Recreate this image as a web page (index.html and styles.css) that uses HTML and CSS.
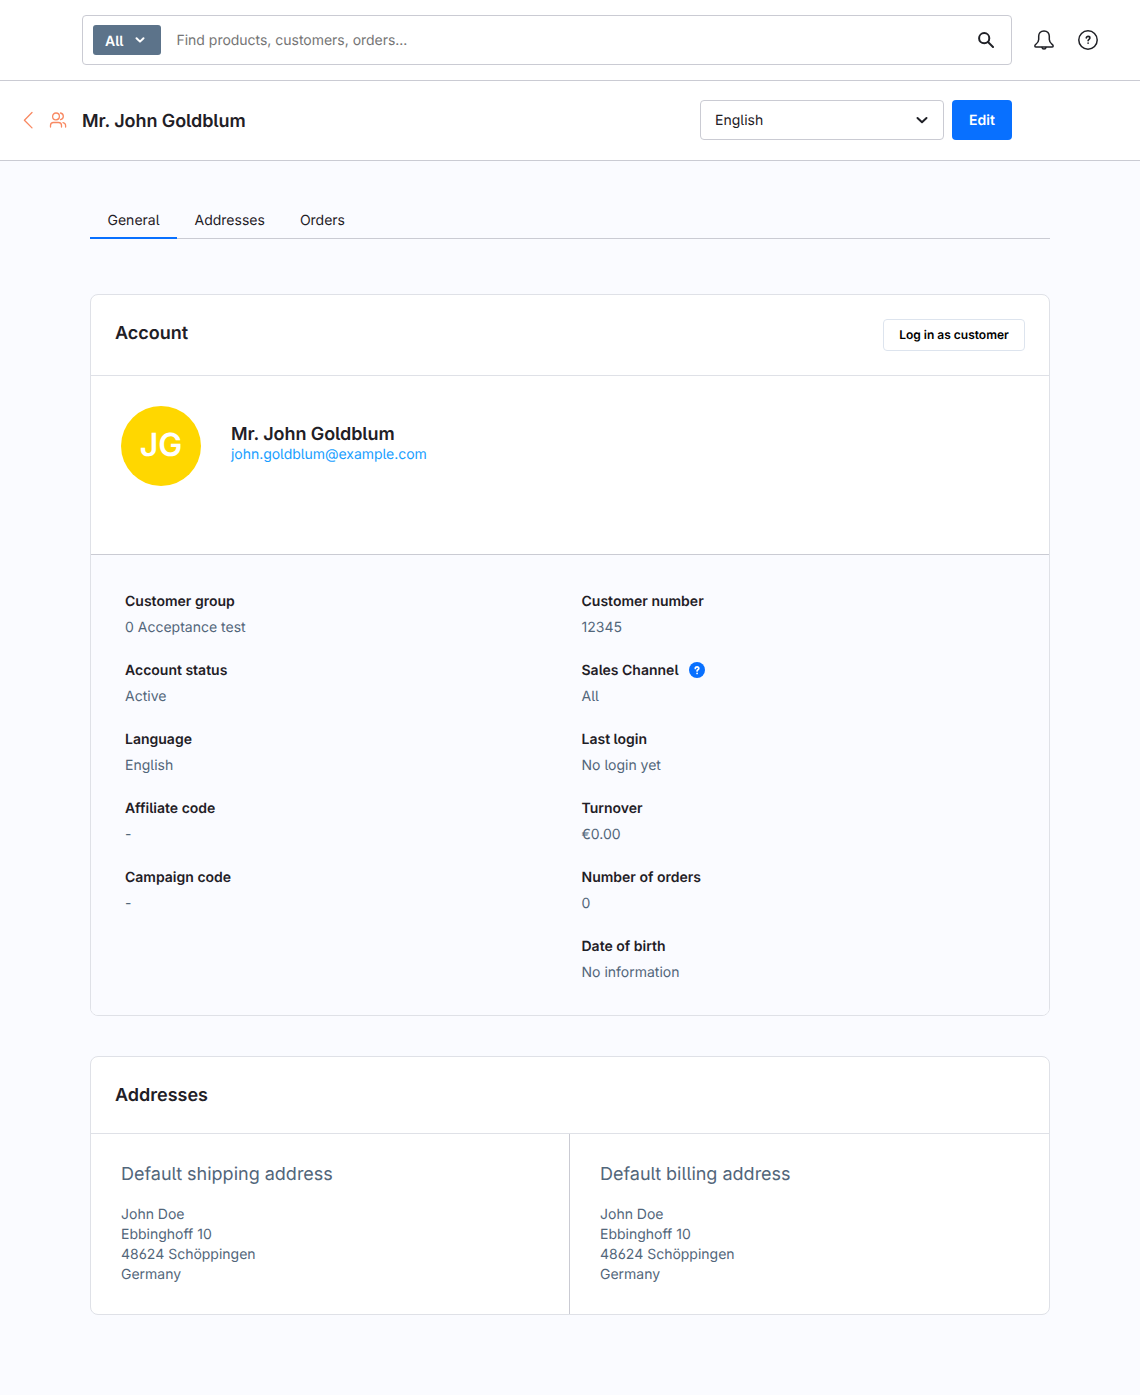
FILE: index.html
```html
<!DOCTYPE html>
<html lang="en">
<head>
<meta charset="utf-8">
<title>Mr. John Goldblum</title>
<link rel="stylesheet" href="styles.css">
</head>
<body>
<header class="topbar">
  <div class="search">
    <button class="search-type">All
      <svg class="search-caret" width="10" height="10" viewBox="0 0 10 10"><path d="M1.500 3.200 5 6.600 8.500 3.200"/></svg>
    </button>
    <span class="search-hint">Find products, customers, orders...</span>
    <svg class="search-icon" width="16" height="16" viewBox="0 0 16 16"><circle cx="6.200" cy="6.200" r="5.100"/><path d="m10 10 5 5"/></svg>
  </div>
  <svg class="bell" width="20" height="20" viewBox="0 0 20 20"><path d="M10 1C6.500 1 4.700 3.300 4.700 6.300v3.200c0 2-.9 3.200-2.800 4.800-1.600 1.300-1.300 2.700.3 2.700h15.600c1.600 0 1.900-1.400.3-2.700-1.900-1.600-2.800-2.800-2.800-4.800V6.300C15.300 3.300 13.500 1 10 1z"/><path d="M8 17.400c.3 2.200 3.700 2.200 4 0"/></svg>
  <svg class="help" width="20" height="20" viewBox="0 0 20 20"><circle cx="10" cy="10" r="9.200"/><path class="help-mark" d="M8.300 8c0-2.200 3.600-2.100 3.600 0 0 1.400-1.800 1.200-1.800 2.700M10.100 13v.3"/></svg>
</header>
<div class="pagehead">
  <svg class="back" width="10" height="18" viewBox="0 0 10 18"><path d="M9 1.500 1.400 9.200 9 16.900"/></svg>
  <svg class="users" width="18" height="16" viewBox="0 0 18 16"><circle cx="7" cy="4.400" r="3.400"/><path d="M1.500 15v-1.500c0-1.900 1.300-3 3-3h5c1.700 0 3 1.100 3 3V15M11.500 1a3.400 3.400 0 0 1 0 6.700M14 10.600c1.600.3 2.600 1.300 2.600 2.900V15"/></svg>
  <h1 class="title">Mr. John Goldblum</h1>
  <div class="select"><span class="select-value">English</span>
    <svg width="12" height="12" viewBox="0 0 12 12"><path d="M1.500 4 6 8.200 10.500 4"/></svg>
  </div>
  <button class="edit">Edit</button>
</div>
<main class="content">
  <nav class="tabs">
    <a class="tab tab-active">General</a>
    <a class="tab">Addresses</a>
    <a class="tab">Orders</a>
  </nav>
  <section class="card">
    <div class="card-head card-head-account">
      <h2 class="card-title">Account</h2>
      <button class="login">Log in as customer</button>
    </div>
    <div class="profile">
      <div class="avatar">JG</div>
      <div class="identity">
        <div class="name">Mr. John Goldblum</div>
        <a class="mail">john.goldblum@example.com</a>
      </div>
    </div>
    <div class="facts">
      <dl class="facts-col">
        <dt>Customer group</dt><dd>0 Acceptance test</dd>
        <dt>Account status</dt><dd>Active</dd>
        <dt>Language</dt><dd>English</dd>
        <dt>Affiliate code</dt><dd>-</dd>
        <dt>Campaign code</dt><dd>-</dd>
      </dl>
      <dl class="facts-col">
        <dt>Customer number</dt><dd>12345</dd>
        <dt>Sales Channel<svg class="hint" width="16" height="16" viewBox="0 0 16 16"><circle cx="8" cy="8" r="8"/><path d="M6.300 6.500c0-2.200 3.500-2.100 3.500 0 0 1.300-1.700 1.200-1.700 2.400M8.100 11.300v.2"/></svg></dt><dd>All</dd>
        <dt>Last login</dt><dd>No login yet</dd>
        <dt>Turnover</dt><dd>€0.00</dd>
        <dt>Number of orders</dt><dd>0</dd>
        <dt>Date of birth</dt><dd>No information</dd>
      </dl>
    </div>
  </section>
  <section class="card">
    <div class="card-head">
      <h2 class="card-title">Addresses</h2>
    </div>
    <div class="addresses">
      <div class="address">
        <h3 class="address-title">Default shipping address</h3>
        <div>John Doe</div><div>Ebbinghoff 10</div><div>48624 Schöppingen</div><div>Germany</div>
      </div>
      <div class="address">
        <h3 class="address-title">Default billing address</h3>
        <div>John Doe</div><div>Ebbinghoff 10</div><div>48624 Schöppingen</div><div>Germany</div>
      </div>
    </div>
  </section>
</main>
</body>
</html>
```
FILE: styles.css
```css
* { box-sizing: border-box; }
body {
  margin: 0;
  min-height: 1395px;
  background: #fafbff;
  color: #1f2026;
  font: 390 14px/20px Inter, sans-serif;
  font-feature-settings: "cv05", "cv03", "cv04";
  text-rendering: geometricPrecision;
}
h1, h2, h3, dl, dd { margin: 0; }
button { font: inherit; font-feature-settings: inherit; letter-spacing: inherit; text-rendering: inherit; cursor: pointer; }
svg { fill: none; flex: none; stroke: currentColor; stroke-linecap: round; stroke-linejoin: round; }

.topbar {
  display: flex;
  align-items: center;
  height: 81px;
  padding: 0 42px 1px 82px;
  background: #fff;
  border-bottom: 1px solid #cacbd3;
}
.search {
  display: flex;
  align-items: center;
  width: 930px;
  height: 50px;
  padding: 0 17px 0 10px;
  border: 1px solid #cacbd3;
  border-radius: 4px;
}
.search-type {
  display: flex;
  align-items: center;
  gap: 11px;
  width: 68px;
  height: 30px;
  padding: 4px 12px 0;
  border: 0;
  border-radius: 3px;
  background: #5c738a;
  color: #fff;
  font-weight: 600;
}
.search-caret { stroke-width: 2; margin-top: -3px; }
.search-hint { margin-left: 15.5px; padding-top: 2px; color: #757575; letter-spacing: -0.02px; }
.search-icon { margin-left: auto; stroke-width: 2; }
.bell { margin: 1px 0 0 22px; stroke-width: 1.5; }
.help { margin-left: 24px; stroke-width: 1.5; }
.help-mark { stroke-width: 1.6; }

.pagehead {
  display: flex;
  align-items: center;
  height: 80px;
  padding: 0 128px 1px 23px;
  background: #fff;
  border-bottom: 1px solid #cacbd3;
}
.back, .users { color: #f88962; stroke-width: 1.3; }
.users { margin-left: 16px; }
.title { flex: 1; margin: 4px 0 0 15px; font-size: 18px; line-height: 24px; font-weight: 600; letter-spacing: -0.08px; }
.select {
  display: flex;
  align-items: center;
  justify-content: space-between;
  width: 244px;
  height: 40px;
  padding: 0 15px 0 14px;
  border: 1px solid #cacbd3;
  border-radius: 4px;
}
.select-value { padding-top: 2px; }
.select svg { stroke-width: 2; }
.edit { width: 60px; height: 40px; margin-left: 8px; padding: 2px 0 0; border: 0; border-radius: 4px; background: #0870ff; color: #fff; font-weight: 600; }

.content { width: 960px; margin: 0 auto; padding-top: 39px; }
.tabs { display: flex; height: 39px; margin-bottom: 55px; box-shadow: inset 0 -1px #cacbd3; }
.tab { padding: 11px 17.5px 0; }
.tab-active { border-bottom: 2px solid #0870ff; }

.card { margin-bottom: 40px; background: #fff; border: 1px solid #dfe1e7; border-radius: 8px; overflow: hidden; }
.card-head { display: flex; justify-content: space-between; height: 77px; padding: 24px; border-bottom: 1px solid #dfe1e7; }
.card-head-account { height: 81px; }
.card-title { padding-top: 1px; font-size: 18px; line-height: 28px; font-weight: 600; }
.login {
  width: 142px;
  height: 32px;
  padding: 0;
  border: 1px solid #dde4ee;
  border-radius: 4px;
  background: #fff;
  color: #000;
  font-size: 12px;
  font-weight: 600;
  font-feature-settings: normal;
}
.profile { display: flex; gap: 30px; height: 179px; padding: 30px; border-bottom: 1px solid #cacbd3; }
.avatar { display: flex; align-items: center; justify-content: center; width: 80px; height: 80px; border-radius: 50%; background: #ffd700; color: #fff; font-size: 32px; font-weight: 600; padding-bottom: 2px; }
.identity { padding-top: 19px; }
.name { font-size: 18px; font-weight: 600; letter-spacing: -0.08px; }
.mail { color: #189eff; letter-spacing: -0.04px; }
.facts { display: grid; grid-template-columns: 1fr 1fr; height: 460px; padding: 37px 11px 0 34px; background: #fafbff; }
.facts dt { display: flex; align-items: center; height: 20px; font-weight: 600; }
.facts dd { height: 20px; margin: 6px 0 23px; color: #52667a; }
.hint { margin: -2px 0 0 10px; fill: #0870ff; stroke: none; }
.hint path { fill: none; stroke: #fff; stroke-width: 1.7; }

.addresses { display: grid; grid-template-columns: 1fr 1fr; height: 180px; }
.address { padding: 29px 30px 0; color: #52667a; }
.address:first-child { border-right: 1px solid #cacbd3; }
.address-title { margin-bottom: 18px; font-size: 18px; line-height: 24px; font-weight: 400; }
```
